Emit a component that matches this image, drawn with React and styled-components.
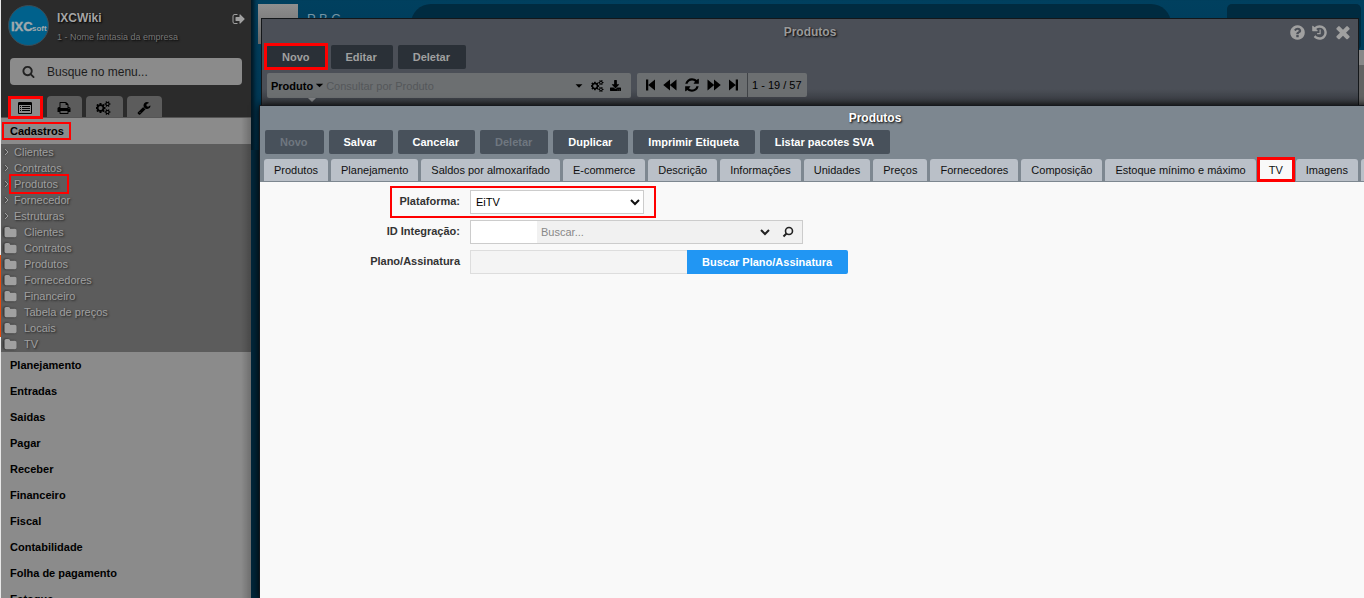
import React from "react";
import styled, { createGlobalStyle, css } from "styled-components";
import { FaDownload } from "react-icons/fa";

const GlobalStyle = createGlobalStyle`
   * {
      box-sizing: border-box;
   }
   body {
      margin: 0;
      overflow: hidden;
      font-family: "Liberation Sans", Arial, sans-serif;
      font-size: 11px;
      color: #111;
   }
   button, input, select {
      font-family: inherit;
      font-size: 11px;
   }
   a {
      color: inherit;
      text-decoration: none;
   }
`;

const icons = {
   search:
      "M1216 832q0-185-131.5-316.5t-316.5-131.5-316.5 131.5-131.5 316.5 131.5 316.5 316.5 131.5 316.5-131.5 131.5-316.5zm512 832q0 52-38 90t-90 38q-54 0-90-38l-343-342q-179 124-399 124-143 0-273.5-55.5t-225-150-150-225-55.5-273.5 55.5-273.5 150-225 225-150 273.5-55.5 273.5 55.5 225 150 150 225 55.5 273.5q0 220-124 399l343 343q37 37 37 90z",
   print:
      "M448 1536h896v-256h-896v256zm0-640h896v-384h-160q-40 0-68-28t-28-68v-160h-640v640zm1152 64q0-26-19-45t-45-19-45 19-19 45 19 45 45 19 45-19 19-45zm128 0v416q0 13-9.5 22.5t-22.5 9.5h-224v160q0 40-28 68t-68 28h-960q-40 0-68-28t-28-68v-160h-224q-13 0-22.5-9.5t-9.5-22.5v-416q0-79 56.5-135.5t135.5-56.5h64v-544q0-40 28-68t68-28h672q40 0 88 20t76 48l152 152q28 28 48 76t20 88v256h64q79 0 135.5 56.5t56.5 135.5z",
   list:
      "M160 128h1472q66 0 113 47t47 113v1216q0 66-47 113t-113 47h-1472q-66 0-113-47t-47-113v-1216q0-66 47-113t113-47zm-32 384v992q0 32 32 32h1472q32 0 32-32v-992zM256 640h128v128h-128zM256 896h128v128h-128zM256 1152h128v128h-128zM512 640h1024v128h-1024zM512 896h1024v128h-1024zM512 1152h1024v128h-1024z",
   wrench:
      "M448 1472q0-26-19-45t-45-19-45 19-19 45 19 45 45 19 45-19 19-45zm644-420l-682 682q-37 37-90 37-52 0-91-37l-106-108q-38-36-38-90 0-53 38-91l681-681q39 98 114.5 173.5t173.5 114.5zm634-435q0 39-23 106-47 134-164.5 217.5t-258.5 83.5q-185 0-316.5-131.5t-131.5-316.5 131.5-316.5 316.5-131.5q58 0 121.5 16.5t107.5 46.5q16 11 16 28t-16 28l-293 169v224l193 107q5-3 79-48.5t135.5-81 70.5-35.5q15 0 23.5 10t8.5 25z",
   cogs:
      "M832 896q0-106-75-181t-181-75-181 75-75 181 75 181 181 75 181-75 75-181zm768 512q0-52-38-90t-90-38-90 38-38 90q0 53 37.5 90.5t90.5 37.5 90.5-37.5 37.5-90.5zm0-1024q0-52-38-90t-90-38-90 38-38 90q0 53 37.5 90.5t90.5 37.5 90.5-37.5 37.5-90.5zm-384 421v185q0 10-7 19.5t-16 10.5l-155 24q-11 35-32 76 34 48 90 115 7 11 7 20 0 12-7 19-23 30-82.5 89.5t-78.5 59.5q-11 0-21-7l-115-90q-37 19-77 31-11 108-23 155-7 24-30 24h-186q-11 0-20-7.5t-10-17.5l-23-153q-34-10-75-31l-118 89q-7 7-20 7-11 0-21-8-144-133-144-160 0-9 7-19 10-14 41-53t47-61q-23-44-35-82l-152-24q-10-1-17-9.5t-7-19.5v-185q0-10 7-19.5t16-10.5l155-24q11-35 32-76-34-48-90-115-7-11-7-20 0-12 7-20 22-30 82-89t79-59q11 0 21 7l115 90q34-18 77-32 11-108 23-154 7-24 30-24h186q11 0 20 7.5t10 17.5l23 153q34 10 75 31l118-89q8-7 20-7 11 0 21 8 144 133 144 160 0 8-7 19-12 16-42 54t-45 60q23 48 34 82l152 23q10 2 17 10.5t7 19.5zm640 533v140q0 16-149 31-12 27-30 52 51 113 51 138 0 4-4 7-122 71-124 71-8 0-46-47t-52-68q-20 2-30 2t-30-2q-14 21-52 68t-46 47q-2 0-124-71-4-3-4-7 0-25 51-138-18-25-30-52-149-15-149-31v-140q0-16 149-31 13-29 30-52-51-113-51-138 0-4 4-7 4-2 35-20t59-34 30-16q8 0 46 46.5t52 67.5q20-2 30-2t30 2q51-71 92-112l6-2q4 0 124 70 4 3 4 7 0 25-51 138 17 23 30 52 149 15 149 31zm0-1024v140q0 16-149 31-12 27-30 52 51 113 51 138 0 4-4 7-122 71-124 71-8 0-46-47t-52-68q-20 2-30 2t-30-2q-14 21-52 68t-46 47q-2 0-124-71-4-3-4-7 0-25 51-138-18-25-30-52-149-15-149-31v-140q0-16 149-31 13-29 30-52-51-113-51-138 0-4 4-7 4-2 35-20t59-34 30-16q8 0 46 46.5t52 67.5q20-2 30-2t30 2q51-71 92-112l6-2q4 0 124 70 4 3 4 7 0 25-51 138 17 23 30 52 149 15 149 31z",
   signOut:
      "M704 1440q0 4 1 20t.5 26.5-3 23.5-10 19.5-20.5 6.5h-320q-119 0-203.5-84.5t-84.5-203.5v-704q0-119 84.5-203.5t203.5-84.5h320q13 0 22.5 9.5t9.5 22.5q0 4 1 20t.5 26.5-3 23.5-10 19.5-20.5 6.5h-320q-66 0-113 47t-47 113v704q0 66 47 113t113 47h312l11.5 1 11.5 3 8 5.5 7 9 2 13.5zm928-544q0 26-19 45l-544 544q-19 19-45 19t-45-19-19-45v-288h-448q-26 0-45-19t-19-45v-384q0-26 19-45t45-19h448v-288q0-26 19-45t45-19 45 19l544 544q19 19 19 45z",
   folder:
      "M1728 608v704q0 92-66 158t-158 66h-1216q-92 0-158-66t-66-158v-960q0-92 66-158t158-66h320q92 0 158 66t66 158v32h672q92 0 158 66t66 158z",
   question:
      "M1024 1376v-192q0-14-9-23t-23-9h-192q-14 0-23 9t-9 23v192q0 14 9 23t23 9h192q14 0 23-9t9-23zm256-672q0-88-55.5-163t-138.5-116-170-41q-243 0-371 213-15 24 8 42l132 100q7 6 19 6 16 0 25-12 53-68 86-92 34-24 86-24 48 0 85.5 26t37.5 59q0 38-20 61t-68 45q-63 28-115.5 86.5t-52.5 125.5v36q0 14 9 23t23 9h192q14 0 23-9t9-23q0-19 21.5-49.5t54.5-49.5q32-18 49-28.5t46-35 44.5-48 28-60.5 12.5-81zm384 192q0 209-103 385.5t-279.5 279.5-385.5 103-385.5-103-279.5-279.5-103-385.5 103-385.5 279.5-279.5 385.5-103 385.5 103 279.5 279.5 103 385.5z",
   history:
      "M1664 896q0 156-61 298t-164 245-245 164-298 61q-172 0-327-72.5t-264-204.5q-7-10-6.5-22.5t8.5-20.5l137-138q10-9 25-9 16 2 23 12 73 95 179 147t225 52q104 0 198.5-40.5t163.5-109.5 109.5-163.5 40.5-198.5-40.5-198.5-109.5-163.5-163.5-109.5-198.5-40.5q-98 0-188 35.5t-160 101.5l137 138q31 30 14 69-17 40-59 40h-448q-26 0-45-19t-19-45v-448q0-42 40-59 39-17 69 14l130 129q107-101 244.5-156.5t284.5-55.5q156 0 298 61t245 164 164 245 61 298zm-640-288v448q0 14-9 23t-23 9h-320q-14 0-23-9t-9-23v-64q0-14 9-23t23-9h224v-352q0-14 9-23t23-9h64q14 0 23 9t9 23z",
   close:
      "M1490 1322q0 40-28 68l-136 136q-28 28-68 28t-68-28l-294-294-294 294q-28 28-68 28t-68-28l-136-136q-28-28-28-68t28-68l294-294-294-294q-28-28-28-68t28-68l136-136q28-28 68-28t68 28l294 294 294-294q28-28 68-28t68 28l136 136q28 28 28 68t-28 68l-294 294 294 294q28 28 28 68z",
   refresh:
      "M1639 1056q0 5-1 7-64 268-268 434.5t-478 166.5q-146 0-282.5-55t-243.5-157l-129 129q-19 19-45 19t-45-19-19-45v-448q0-26 19-45t45-19h448q26 0 45 19t19 45-19 45l-137 137q71 66 161 102t187 36q134 0 250-65t186-179q11-17 53-117 8-23 30-23h192q13 0 22.5 9.5t9.5 22.5zm25-800v448q0 26-19 45t-45 19h-448q-26 0-45-19t-19-45 19-45l138-138q-148-137-349-137-134 0-250 65t-186 179q-11 17-53 117-8 23-30 23h-199q-13 0-22.5-9.5t-9.5-22.5v-7q65-268 270-434.5t480-166.5q146 0 284 55.5t245 156.5l130-129q19-19 45-19t45 19 19 45z",
   first: "M256 192h288v1408h-288zM1408 192v1408l-864-704z",
   last: "M1248 192h288v1408h-288zM384 192v1408l864-704z",
   back: "M896 192v1408l-864-704zM1728 192v1408l-864-704z",
   forward: "M64 192v1408l864-704zM896 192v1408l864-704z",
   caret: "M384 640h1024l-512 512z",
};

const Icon = ({ name, size = 14 }) => (
   <svg
      width={name === "cogs" ? size + 1 : size}
      height={size}
      viewBox={name === "cogs" ? "0 0 1920 1792" : "0 0 1792 1792"}
      fill="currentColor"
      fillRule={name === "list" ? "evenodd" : "nonzero"}
      aria-hidden="true"
   >
      <path d={icons[name]} />
   </svg>
);

// red frame drawn over the steps the user has to follow
const marked = css`
   position: relative;
   &::after {
      content: "";
      position: absolute;
      inset: ${(p) => p.$inset || "0"};
      border: ${(p) => p.$line || 2}px solid #f00;
      pointer-events: none;
   }
`;

const Page = styled.div`
   position: relative;
   display: flex;
   height: 100vh;
   overflow: hidden;
   background: #00263a;
`;

/* ---------- sidebar ---------- */

const Sidebar = styled.aside`
   flex: none;
   width: 251px;
   border-left: 1px solid #e8e8e8;
   background: linear-gradient(90deg, transparent 96%, rgba(0, 0, 0, 0.2)), #8b8b8b;
   overflow: hidden;
`;

const SideTop = styled.header`
   height: 118px;
   background: #2b2b2b;
   border-bottom: 1px solid #555;
`;

const Profile = styled.div`
   display: flex;
   gap: 8px;
   height: 58px;
   padding: 5px 5px 0 7px;
`;

const Company = styled.div`
   flex: 1;
   padding-top: 5px;
   text-shadow: 1px 1px 2px #000;
`;

const CompanyName = styled.div`
   font-size: 12px;
   line-height: 16px;
   font-weight: bold;
   color: #a5a5a5;
`;

const CompanySub = styled.div`
   margin-top: 5px;
   font-size: 9px;
   line-height: 12px;
   color: #777;
`;

const IconButton = styled.button`
   display: flex;
   align-items: center;
   justify-content: center;
   padding: 0;
   border: 0;
   background: none;
   color: ${(p) => p.$color || "#000"};
   cursor: pointer;
`;

const Logout = styled(IconButton)`
   align-self: flex-start;
   margin-top: 7px;
`;

const MenuSearch = styled.label`
   display: flex;
   align-items: center;
   gap: 12px;
   height: 27px;
   margin: 0 9px;
   padding: 0 12px;
   border-radius: 4px;
   background: #8b8b8b;
   color: #222;
   input {
      flex: 1;
      min-width: 0;
      padding: 0;
      border: 0;
      outline: 0;
      background: none;
      font-size: 12px;
   }
   input::placeholder {
      color: #1c1c1c;
      opacity: 1;
   }
`;

const SideTabs = styled.nav`
   display: flex;
   gap: 4px;
   margin-top: 11px;
   padding: 0 7px;
`;

const SideTab = styled.button`
   display: flex;
   align-items: center;
   justify-content: center;
   width: 35px;
   height: 21px;
   padding: 2px 2px 0 0;
   border: 0;
   border-radius: 4px 4px 0 0;
   background: ${(p) => (p.$active ? "#8b8b8b" : "#5c5c5c")};
   color: #000;
   ${(p) => p.$wide && "width: 37px;"}
   ${(p) => p.$active && marked}
`;

const Section = styled.a`
   display: block;
   height: 26px;
   padding-left: 9px;
   line-height: 26px;
   font-weight: bold;
   color: #000;
   span {
      ${(p) => p.$marked && marked}
   }
`;

const SubMenu = styled.ul`
   margin: 0;
   padding: 0;
   list-style: none;
   background: linear-gradient(90deg, transparent 96%, rgba(0, 0, 0, 0.2)), #5c5c5c;
   color: #a0a0a0;
   text-shadow: 1px 1px 2px #222;
`;

const SubItem = styled.li`
   a {
      display: flex;
      align-items: center;
      gap: ${(p) => (p.$folder ? 7 : 5)}px;
      height: 16px;
      padding-left: 3px;
   }
   svg {
      flex: none;
      filter: drop-shadow(-1px 0 1px #222);
   }
   span {
      ${(p) => p.$marked && marked}
   }
`;

/* ---------- desktop behind the windows ---------- */

const Desktop = styled.div`
   display: grid;
   grid-template-columns: 40px 104px 1fr 134px;
   align-items: start;
   flex: 1;
   height: 150px;
   padding: 4px 3px 0 7px;
   background: linear-gradient(#00405f, #00344f);
   box-shadow: inset 7px 0 4px -4px #001520;
`;

const Thumb = styled.div`
   height: 40px;
   background: linear-gradient(#8f8f8f, #666);
`;

const DeskText = styled.div`
   padding: 7px 0 0 9px;
   font-size: 13px;
   line-height: 15px;
   color: #7694a3;
   white-space: nowrap;
`;

const DeskShape = styled.div`
   height: 46px;
   margin: 0 ${(p) => (p.$round ? "56px 0 9px" : "0")};
   border-radius: ${(p) => (p.$round ? "20px" : "5px")};
   background: #002b40;
`;

/* ---------- windows ---------- */

const Window = styled.section`
   position: absolute;
   top: 18px;
   left: 261px;
   right: 5px;
   height: 120px;
   border: 1px solid #14171a;
   background: linear-gradient(#4b4f57 70px, #33363b 88px);
`;

const FrontWindow = styled(Window)`
   top: 105px;
   left: 259px;
   right: -127px;
   bottom: 0;
   height: auto;
   display: flex;
   flex-direction: column;
   border-color: #15181d;
   border-bottom: 0;
   background: #7d8790;
   box-shadow: 0 0 8px #000;
`;

const TitleBar = styled.header`
   display: flex;
   flex: none;
   align-items: center;
   justify-content: center;
   height: ${(p) => (p.$front ? 24 : 26)}px;
   color: ${(p) => (p.$front ? "#fff" : "#9a9a9a")};
   font-size: 12px;
   font-weight: bold;
   text-shadow: 1px 1px 2px #000;
`;

const WindowTools = styled.div`
   position: absolute;
   top: 3px;
   right: 5px;
   display: flex;
   gap: 5px;
`;

const Toolbar = styled.div`
   display: flex;
   flex: none;
   gap: 5px;
   padding: 0 5px;
`;

const ToolButton = styled.button`
   height: 24px;
   padding: 0 16px 0 15px;
   border: 0;
   border-radius: 2px;
   background: ${(p) => (p.$dim ? "#2a3037" : "#48515b")};
   color: ${(p) => (p.$dim ? "#a0a0a0" : "#fff")};
   font-weight: bold;
   white-space: nowrap;
   &:disabled {
      color: #6f7780;
   }
   ${(p) => p.$marked && marked}
`;

const SearchRow = styled.div`
   display: flex;
   gap: 6px;
   padding: 4px 5px;
`;

const SearchBox = styled.div`
   position: relative;
   display: flex;
   align-items: center;
   width: 364px;
   height: 25px;
   padding: 0 10px 0 4px;
   border-radius: 2px;
   background: #6c6f71;
   color: #000;
   /* pointer under the selected column */
   &::after {
      content: "";
      position: absolute;
      top: 25px;
      left: 41px;
      border: 4px solid transparent;
      border-top-color: #85878a;
   }
   input {
      flex: 1;
      min-width: 0;
      padding: 0;
      border: 0;
      outline: 0;
      background: none;
   }
   input::placeholder {
      color: #54575a;
      opacity: 1;
   }
`;

const ColumnPicker = styled(IconButton)`
   font-weight: bold;
`;

const BoxTools = styled.div`
   display: flex;
   align-items: center;
   gap: 6px;
`;

const Pager = styled.div`
   display: flex;
   height: 24px;
   border-radius: 2px;
   background: #6c6f71;
`;

const PagerButtons = styled.div`
   display: flex;
   align-items: center;
   gap: 5px;
   padding: 0 7px;
`;

const ReloadButton = styled(IconButton)`
   padding: 0 2px;
`;

const PagerCount = styled.div`
   padding: 0 5px 0 4px;
   border-left: 1px solid #404347;
   line-height: 25px;
   color: #000;
`;

const Tabs = styled.nav`
   display: flex;
   flex: none;
   gap: 3px;
   height: 28px;
   padding: 5px 4px 0;
   border-bottom: 1px solid #7d8790;
`;

const Tab = styled.button`
   flex: none;
   padding: 0 10px;
   border: 0;
   border-radius: 3px 3px 0 0;
   background: ${(p) => (p.$active ? "#f9f9f9" : "#bac0c8")};
   color: #111;
   white-space: nowrap;
   ${(p) => p.$active && marked}
`;

const Form = styled.form`
   display: flex;
   flex-direction: column;
   align-items: flex-start;
   gap: 6px;
   flex: 1;
   padding-top: 8px;
   background: #f9f9f9;
`;

const Field = styled.div`
   display: flex;
   ${(p) => p.$marked && marked}
   > label {
      width: 200px;
      margin-right: 10px;
      line-height: 22px;
      text-align: right;
      font-weight: bold;
      color: #333;
   }
`;

const SelectBox = styled.div`
   position: relative;
   width: 174px;
   height: 24px;
   select {
      width: 100%;
      height: 100%;
      padding: 0 5px;
      border: 1px solid #ccc;
      background: #fff;
      color: #000;
      appearance: none;
   }
   svg {
      position: absolute;
      top: 8px;
      right: 4px;
      pointer-events: none;
   }
`;

const Lookup = styled.div`
   display: flex;
   width: 333px;
   height: 24px;
   border: 1px solid #ccc;
   background: #f1f1f1;
   input {
      flex: 1;
      min-width: 0;
      padding: 0 4px;
      border: 0;
      outline: 0;
      background: none;
   }
   input:first-child {
      flex: 0 0 66px;
      background: #fff;
   }
   input::placeholder {
      color: #888;
      opacity: 1;
   }
`;

const LookupTools = styled.div`
   display: flex;
   align-items: center;
   gap: 12px;
   padding-right: 8px;
`;

const PlanInput = styled.input`
   width: 217px;
   height: 24px;
   border: 1px solid #ddd;
   border-right: 0;
   background: #f4f4f4;
`;

const PlanButton = styled(ToolButton)`
   border-radius: 0 2px 2px 0;
   background: #2196f3;
`;

const OrangeMark = styled.div`
   position: absolute;
   top: 255px;
   left: 0;
   width: 1px;
   height: 82px;
   background: #e84a0c;
`;

const DeskScroll = styled.div`
   position: absolute;
   top: 50px;
   right: 0;
   width: 5px;
   height: 60px;
   border-top: 15px solid #888;
   background: #626262;
`;

const Chevron = () => (
   <svg width="10" height="8" viewBox="0 0 10 8" fill="none" stroke="currentColor" strokeWidth="2">
      <path d="M1 2l4 4 4-4" />
   </svg>
);

const Logo = () => (
   <svg width="41" height="41" viewBox="0 0 41 41" aria-label="IXCsoft">
      <circle cx="20.5" cy="20.5" r="20" fill="#00618c" stroke="#3d4c55" />
      <text x="3" y="26" fontSize="13" fontWeight="bold" fill="#a0a9ad" stroke="#a0a9ad" strokeWidth="0.4">
         IXC
      </text>
      <text x="24" y="26" fontSize="8" fontWeight="bold" fill="#a0a9ad">
         soft
      </text>
   </svg>
);

const shortcuts = ["Clientes", "Contratos", "Produtos", "Fornecedor", "Estruturas"];
const folders = ["Clientes", "Contratos", "Produtos", "Fornecedores", "Financeiro", "Tabela de preços", "Locais", "TV"];
const sections = [
   "Planejamento",
   "Entradas",
   "Saidas",
   "Pagar",
   "Receber",
   "Financeiro",
   "Fiscal",
   "Contabilidade",
   "Folha de pagamento",
   "Estoque",
];
const actions = ["Novo", "Salvar", "Cancelar", "Deletar", "Duplicar", "Imprimir Etiqueta", "Listar pacotes SVA"];
const tabs = [
   "Produtos",
   "Planejamento",
   "Saldos por almoxarifado",
   "E-commerce",
   "Descrição",
   "Informações",
   "Unidades",
   "Preços",
   "Fornecedores",
   "Composição",
   "Estoque mínimo e máximo",
   "TV",
   "Imagens",
   "",
];

const SideMenu = () => (
   <Sidebar>
      <SideTop>
         <Profile>
            <Logo />
            <Company>
               <CompanyName>IXCWiki</CompanyName>
               <CompanySub>1 - Nome fantasia da empresa</CompanySub>
            </Company>
            <Logout $color="#a0a0a0" aria-label="Sair">
               <Icon name="signOut" />
            </Logout>
         </Profile>
         <MenuSearch>
            <Icon name="search" size={13} />
            <input type="text" placeholder="Busque no menu..." aria-label="Busque no menu" />
         </MenuSearch>
         <SideTabs>
            <SideTab $active $line={3} $inset="0 0 -2px" aria-label="Cadastros">
               <Icon name="list" />
            </SideTab>
            <SideTab aria-label="Imprimir">
               <Icon name="print" />
            </SideTab>
            <SideTab $wide aria-label="Configurações">
               <Icon name="cogs" />
            </SideTab>
            <SideTab aria-label="Ferramentas">
               <Icon name="wrench" />
            </SideTab>
         </SideTabs>
      </SideTop>
      <Section href="#" $marked $inset="-3px -7px -3px -8px">
         <span>Cadastros</span>
      </Section>
      <SubMenu>
         {shortcuts.map((name) => (
            <SubItem key={name} $marked={name === "Produtos"} $inset="-4px -11px -4px -5px">
               <a href="#">
                  <svg width="5" height="8" viewBox="0 0 5 8" fill="none" stroke="currentColor">
                     <path d="M1 1l3 3-3 3" />
                  </svg>
                  <span>{name}</span>
               </a>
            </SubItem>
         ))}
         {folders.map((name) => (
            <SubItem key={name} $folder>
               <a href="#">
                  <Icon name="folder" size={13} />
                  <span>{name}</span>
               </a>
            </SubItem>
         ))}
      </SubMenu>
      {sections.map((name) => (
         <Section key={name} href="#">
            {name}
         </Section>
      ))}
   </Sidebar>
);

const ListWindow = () => (
   <Window>
      <TitleBar>Produtos</TitleBar>
      <WindowTools>
         <IconButton $color="#a0a0a0" aria-label="Ajuda">
            <Icon name="question" size={17} />
         </IconButton>
         <IconButton $color="#a0a0a0" aria-label="Histórico">
            <Icon name="history" size={17} />
         </IconButton>
         <IconButton $color="#a0a0a0" aria-label="Fechar">
            <Icon name="close" size={20} />
         </IconButton>
      </WindowTools>
      <Toolbar>
         <ToolButton $dim $marked $line={3} $inset="-2px -2px -1px -3px">
            Novo
         </ToolButton>
         <ToolButton $dim>Editar</ToolButton>
         <ToolButton $dim>Deletar</ToolButton>
      </Toolbar>
      <SearchRow>
         <SearchBox>
            <ColumnPicker>
               Produto
               <Icon name="caret" size={13} />
            </ColumnPicker>
            <input type="text" placeholder="Consultar por Produto" aria-label="Consultar por Produto" />
            <BoxTools>
               <IconButton aria-label="Opções">
                  <Icon name="caret" size={12} />
               </IconButton>
               <IconButton aria-label="Configurar">
                  <Icon name="cogs" size={12} />
               </IconButton>
               <IconButton aria-label="Exportar">
                  <FaDownload size={11} />
               </IconButton>
            </BoxTools>
         </SearchBox>
         <Pager>
            <PagerButtons>
               <IconButton aria-label="Primeira">
                  <Icon name="first" />
               </IconButton>
               <IconButton aria-label="Anterior">
                  <Icon name="back" />
               </IconButton>
               <ReloadButton aria-label="Atualizar">
                  <Icon name="refresh" size={16} />
               </ReloadButton>
               <IconButton aria-label="Próxima">
                  <Icon name="forward" />
               </IconButton>
               <IconButton aria-label="Última">
                  <Icon name="last" />
               </IconButton>
            </PagerButtons>
            <PagerCount>1 - 19 / 57</PagerCount>
         </Pager>
      </SearchRow>
   </Window>
);

const ProductWindow = () => (
   <FrontWindow>
      <TitleBar $front>Produtos</TitleBar>
      <Toolbar>
         {actions.map((name) => (
            <ToolButton key={name} disabled={name === "Novo" || name === "Deletar"}>
               {name}
            </ToolButton>
         ))}
      </Toolbar>
      <Tabs>
         {tabs.map((name) => (
            <Tab key={name} $active={name === "TV"} $line={3} $inset="-2px -2px -1px">
               {name}
            </Tab>
         ))}
      </Tabs>
      <Form>
         <Field $marked $inset="-4px -12px -4px 130px">
            <label htmlFor="plataforma">Plataforma:</label>
            <SelectBox>
               <select id="plataforma" defaultValue="EiTV">
                  <option>EiTV</option>
               </select>
               <Chevron />
            </SelectBox>
         </Field>
         <Field>
            <label htmlFor="integracao">ID Integração:</label>
            <Lookup>
               <input id="integracao" type="text" />
               <input type="text" placeholder="Buscar..." aria-label="Buscar" />
               <LookupTools>
                  <IconButton type="button" $color="#222" aria-label="Abrir lista">
                     <Chevron />
                  </IconButton>
                  <IconButton type="button" $color="#222" aria-label="Pesquisar">
                     <svg width="12" height="12" viewBox="0 0 12 12" fill="none" stroke="currentColor">
                        <circle cx="7" cy="5" r="3.5" strokeWidth="1.6" />
                        <path d="M4.5 7.5L1.5 10.5" strokeWidth="2" />
                     </svg>
                  </IconButton>
               </LookupTools>
            </Lookup>
         </Field>
         <Field>
            <label htmlFor="plano">Plano/Assinatura</label>
            <PlanInput id="plano" type="text" readOnly />
            <PlanButton type="button">Buscar Plano/Assinatura</PlanButton>
         </Field>
      </Form>
   </FrontWindow>
);

const App = () => (
   <Page>
      <GlobalStyle />
      <SideMenu />
      <OrangeMark />
      <Desktop>
         <Thumb />
         <DeskText>P B C —</DeskText>
         <DeskShape $round />
         <DeskShape />
      </Desktop>
      <DeskScroll />
      <ListWindow />
      <ProductWindow />
   </Page>
);

export default App;
